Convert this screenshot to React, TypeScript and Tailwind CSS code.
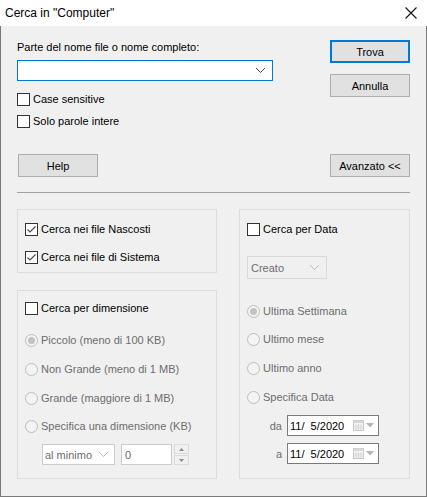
import { useState } from 'react';

const font = { fontFamily: '"Liberation Sans", Arial, sans-serif' };

function Check({ checked }: { checked?: boolean }) {
   return (
      <span className="flex h-[13px] w-[13px] shrink-0 items-center justify-center border border-[#333333] bg-white">
         {checked && (
            <svg width="11" height="11" viewBox="0 0 11 11">
               <path d="M1.5 5.5 L4 8 L9.5 2.5" fill="none" stroke="#4d4d4d" strokeWidth="1.2" />
            </svg>
         )}
      </span>
   );
}

function Radio({ selected }: { selected?: boolean }) {
   return (
      <svg width="13" height="13" viewBox="0 0 13 13" className="shrink-0">
         <circle cx="6.5" cy="6.5" r="6" fill="#f4f4f4" stroke="#bcbcbc" />
         {selected && <circle cx="6.5" cy="6.5" r="3.5" fill="#c2c2c2" />}
      </svg>
   );
}

function CheckRow({ label, checked, className = '' }: { label: string; checked?: boolean; className?: string }) {
   return (
      <div className={`flex h-4 items-center gap-[3px] whitespace-nowrap text-black ${className}`}>
         <Check checked={checked} />
         <span>{label}</span>
      </div>
   );
}

function RadioRow({ label, selected, className = '' }: { label: string; selected?: boolean; className?: string }) {
   return (
      <div className={`flex h-4 items-center gap-[3px] whitespace-nowrap text-[#6d6d6d] ${className}`}>
         <Radio selected={selected} />
         <span>{label}</span>
      </div>
   );
}

function Chevron({ color = '#444444' }: { color?: string }) {
   return (
      <svg width="11" height="7" viewBox="0 0 11 7" className="shrink-0">
         <path d="M1 1 L5.5 5.5 L10 1" fill="none" stroke={color} strokeWidth="1" />
      </svg>
   );
}

function DateBox({ value }: { value: string }) {
   return (
      <div className="flex h-[21px] w-[92px] items-center border border-[#7a7a7a] bg-white pl-[2px] text-black">
         <span className="flex-1 whitespace-pre">{value}</span>
         <svg width="11" height="11" viewBox="0 0 11 11" className="mr-[2px]">
            <rect x="0.5" y="0.5" width="10" height="10" fill="#f6f6f6" stroke="#c8c8c8" />
            <rect x="0.5" y="0.5" width="10" height="2.5" fill="#d8d8d8" />
            <path d="M3 4 V10 M5.5 4 V10 M8 4 V10 M1 6 H10 M1 8 H10" stroke="#d4d4d4" strokeWidth="0.8" />
         </svg>
         <svg width="8" height="5" viewBox="0 0 8 5" className="mr-[4px]">
            <path d="M0 0 H8 L4 4.5 Z" fill="#b5b5b5" />
         </svg>
      </div>
   );
}

function Button({ label, primary, className = '' }: { label: string; primary?: boolean; className?: string }) {
   return (
      <button
         className={`flex h-[23px] w-[80px] items-center justify-center bg-[#e1e1e1] text-black ${primary ? 'border-2 border-[#0078d7]' : 'border border-[#adadad]'} ${className}`}
      >
         {label}
      </button>
   );
}

export default function App() {
   const [name, setName] = useState<string>('');

   return (
      <div className="flex h-[497px] w-[427px] flex-col text-[11px] leading-4" style={font}>
         <div className="flex h-[26px] items-center justify-between bg-white pl-[5px] pr-[10px]">
            <span className="text-[12px] text-black">Cerca in "Computer"</span>
            <svg width="12" height="12" viewBox="0 0 12 12">
               <path d="M0.5 0.5 L11.5 11.5 M11.5 0.5 L0.5 11.5" stroke="#111111" strokeWidth="1.1" />
            </svg>
         </div>

         <div className="flex flex-1 flex-col border-x border-b border-[#7a7a7a] bg-[#f0f0f0] px-4">
            <div className="flex justify-between">
               <div className="flex w-[256px] flex-col">
                  <label className="mt-[13px] h-4 text-black">Parte del nome file o nome completo:</label>
                  <div className="mt-[5px] flex h-[21px] items-center border border-[#0078d7] bg-white pr-[6px]">
                     <input
                        className="h-full min-w-0 flex-1 bg-transparent px-1 outline-none"
                        value={name}
                        onChange={(e) => setName(e.target.value)}
                     />
                     <Chevron />
                  </div>
                  <CheckRow label="Case sensitive" className="mt-[10px]" />
                  <CheckRow label="Solo parole intere" className="mt-[6px]" />
               </div>
               <div className="flex flex-col">
                  <Button label="Trova" primary className="mt-[14px]" />
                  <Button label="Annulla" className="mt-[11px]" />
               </div>
            </div>

            <div className="mt-[25px] flex justify-between">
               <Button label="Help" className="ml-px" />
               <Button label="Avanzato <<" />
            </div>

            <div className="mt-[15px] h-px bg-[#a0a0a0]" />

            <div className="mt-4 flex gap-[22px]">
               <div className="flex w-[200px] flex-col gap-[17px]">
                  <div className="flex h-[64px] flex-col border border-[#dcdcdc] pl-[7px] pt-[11px]">
                     <CheckRow label="Cerca nei file Nascosti" checked />
                     <CheckRow label="Cerca nei file di Sistema" checked className="mt-3" />
                  </div>
                  <div className="flex h-[189px] flex-col border border-[#dcdcdc] pl-[7px] pt-[9px]">
                     <CheckRow label="Cerca per dimensione" />
                     <RadioRow label="Piccolo (meno di 100 KB)" selected className="mt-4" />
                     <RadioRow label="Non Grande (meno di 1 MB)" className="mt-[13px]" />
                     <RadioRow label="Grande (maggiore di 1 MB)" className="mt-[13px]" />
                     <RadioRow label="Specifica una dimensione (KB)" className="mt-3" />
                     <div className="ml-[17px] mt-[10px] flex items-center">
                        <div className="flex h-[21px] w-[73px] items-center whitespace-nowrap border border-[#cccccc] bg-white pl-[2px] pr-[5px] text-[#6d6d6d]">
                           <span className="flex-1">al minimo</span>
                           <Chevron color="#bdbdbd" />
                        </div>
                        <div className="ml-[6px] flex h-[21px] w-[51px] items-center border border-[#cccccc] bg-white pl-[3px] text-[#6d6d6d]">
                           0
                        </div>
                        <div className="ml-[2px] flex h-[21px] w-[15px] flex-col gap-px">
                           <div className="flex flex-1 items-center justify-center border border-[#dadada] bg-[#f0f0f0]">
                              <svg width="5" height="3" viewBox="0 0 5 3"><path d="M0 3 L2.5 0 L5 3 Z" fill="#8a8a8a" /></svg>
                           </div>
                           <div className="flex flex-1 items-center justify-center border border-[#dadada] bg-[#f0f0f0]">
                              <svg width="5" height="3" viewBox="0 0 5 3"><path d="M0 0 L2.5 3 L5 0 Z" fill="#8a8a8a" /></svg>
                           </div>
                        </div>
                     </div>
                  </div>
               </div>

               <div className="flex h-[270px] w-[171px] flex-col border border-[#dcdcdc] pl-[7px] pt-[11px]">
                  <CheckRow label="Cerca per Data" />
                  <div className="mt-[19px] flex h-[23px] w-[80px] items-center border border-[#d9d9d9] bg-[#f0f0f0] pl-[3px] pr-[6px] text-[#6d6d6d]">
                     <span className="flex-1">Creato</span>
                     <Chevron color="#bdbdbd" />
                  </div>
                  <RadioRow label="Ultima Settimana" selected className="mt-6" />
                  <RadioRow label="Ultimo mese" className="mt-3" />
                  <RadioRow label="Ultimo anno" className="mt-[13px]" />
                  <RadioRow label="Specifica Data" className="mt-[13px]" />
                  <div className="mt-[10px] flex items-center">
                     <span className="w-[40px] pr-[5px] text-right text-[#6d6d6d]">da</span>
                     <DateBox value="11/  5/2020" />
                  </div>
                  <div className="mt-[7px] flex items-center">
                     <span className="w-[40px] pr-[5px] text-right text-[#6d6d6d]">a</span>
                     <DateBox value="11/  5/2020" />
                  </div>
               </div>
            </div>
         </div>
      </div>
   );
}
